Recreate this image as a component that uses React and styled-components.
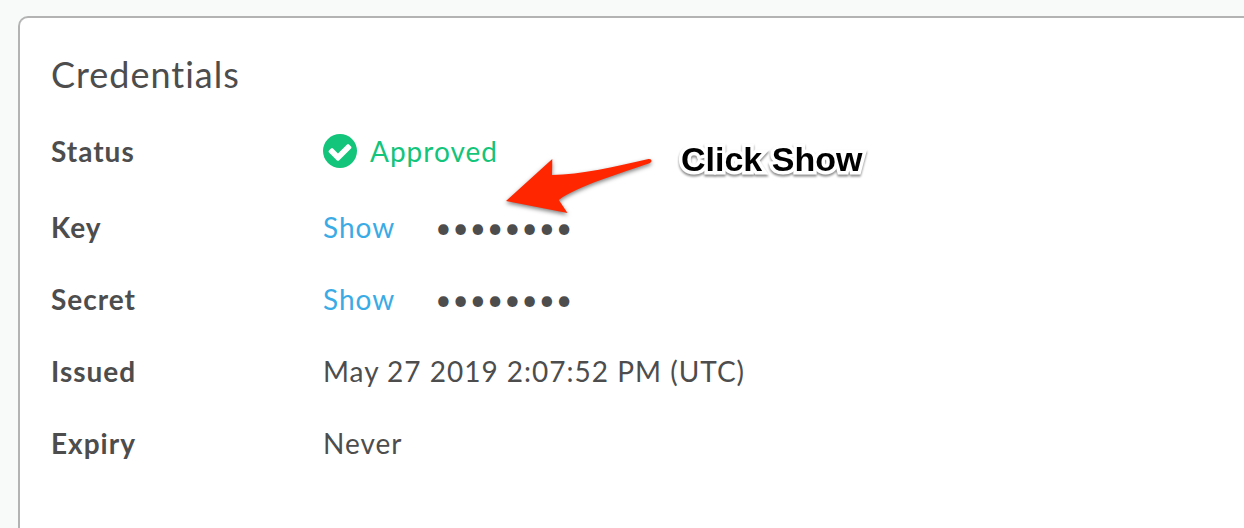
import React from "react";
import styled, { createGlobalStyle } from "styled-components";

const GlobalStyle = createGlobalStyle`
  *, *::before, *::after { box-sizing: border-box; }
  body {
    margin: 0;
    background: #f8faf9;
    color: #4d4d4d;
    font-family: Lato, "Liberation Sans", sans-serif;
    font-size: 28px;
    line-height: 36px;
    letter-spacing: 1px;
  }
`;

const Page = styled.main`
  display: flex;
  min-height: 100vh;
  padding: 16px 0 0 18px;
`;

const Card = styled.section`
  position: relative;
  flex: 1;
  padding: 33px 31px;
  background: #ffffff;
  border: 2px solid #b3b3b3;
  border-width: 2px 0 0 2px;
  border-top-left-radius: 10px;
`;

const Title = styled.h1`
  margin: 0 0 18px;
  font-size: 36px;
  font-weight: 400;
  line-height: 46px;
`;

const Details = styled.dl`
  margin: 0;
`;

const Row = styled.div`
  display: grid;
  grid-template-columns: 272px 1fr;
  align-items: center;
  min-height: 72px;
  margin-bottom: ${({ $spaced }) => ($spaced ? "4px" : "0")};
`;

const Term = styled.dt`
  font-weight: 700;
`;

const Value = styled.dd`
  display: flex;
  align-items: center;
  gap: ${({ $gap }) => $gap || "0"};
  margin: 0;
`;

const Approved = styled.span`
  display: inline-flex;
  align-items: center;
  gap: 13px;
  color: #13c47b;
`;

const ShowButton = styled.button`
  padding: 0;
  border: 0;
  background: none;
  color: #3babe6;
  font: inherit;
  letter-spacing: inherit;
  cursor: pointer;
`;

const Callout = styled.div`
  position: absolute;
  top: 132px;
  left: 480px;
  display: flex;
  align-items: flex-start;
  gap: 21px;
  pointer-events: none;
`;

const Arrow = styled.svg`
  display: block;
  overflow: visible;
  filter: drop-shadow(0 2px 2px rgba(0, 0, 0, 0.5));
`;

const CalloutText = styled.strong`
  color: #000000;
  font-family: "Liberation Sans", Arial, sans-serif;
  font-size: 34px;
  line-height: 18px;
  letter-spacing: normal;
  -webkit-text-stroke: 7px #ffffff;
  paint-order: stroke fill;
  filter: drop-shadow(0 2px 1px rgba(0, 0, 0, 0.45));
`;

function CheckCircle() {
  return (
    <svg width="34" height="34" viewBox="128 128 1536 1536" aria-hidden="true">
      <circle cx="896" cy="896" r="768" fill="currentColor" />
      <path
        d="M1412 734q0-28-18-46l-91-90q-19-19-45-19t-45 19l-408 407-226-226q-19-19-45-19t-45 19l-91 90q-18 18-18 46 0 27 18 45l362 362q19 19 45 19 27 0 46-19l543-543q18-18 18-45z"
        fill="#ffffff"
      />
    </svg>
  );
}

function Secret({ label }) {
  return (
    <Value $gap="40px">
      <ShowButton type="button" aria-label={`Show ${label}`}>Show</ShowButton>
      <span>••••••••</span>
    </Value>
  );
}

export default function App() {
  return (
    <>
      <GlobalStyle />
      <Page>
        <Card>
          <Title>Credentials</Title>
          <Details>
            <Row $spaced>
              <Term>Status</Term>
              <Value>
                <Approved>
                  <CheckCircle />
                  Approved
                </Approved>
              </Value>
            </Row>
            <Row>
              <Term>Key</Term>
              <Secret label="key" />
            </Row>
            <Row>
              <Term>Secret</Term>
              <Secret label="secret" />
            </Row>
            <Row>
              <Term>Issued</Term>
              <Value>May 27 2019 2:07:52 PM (UTC)</Value>
            </Row>
            <Row>
              <Term>Expiry</Term>
              <Value>Never</Value>
            </Row>
          </Details>
          <Callout>
            <Arrow width="160" height="72" viewBox="500 150 160 72" aria-hidden="true">
              <path
                d="M506 201 L552.3 159 L552 175 C580 175 617 166 648.5 159 C652 158.5 652.5 162 649.5 163.3 C622 173 577 186 558.8 200 L567.5 213 Z"
                fill="#ff2600"
              />
            </Arrow>
            <CalloutText>Click Show</CalloutText>
          </Callout>
        </Card>
      </Page>
    </>
  );
}
